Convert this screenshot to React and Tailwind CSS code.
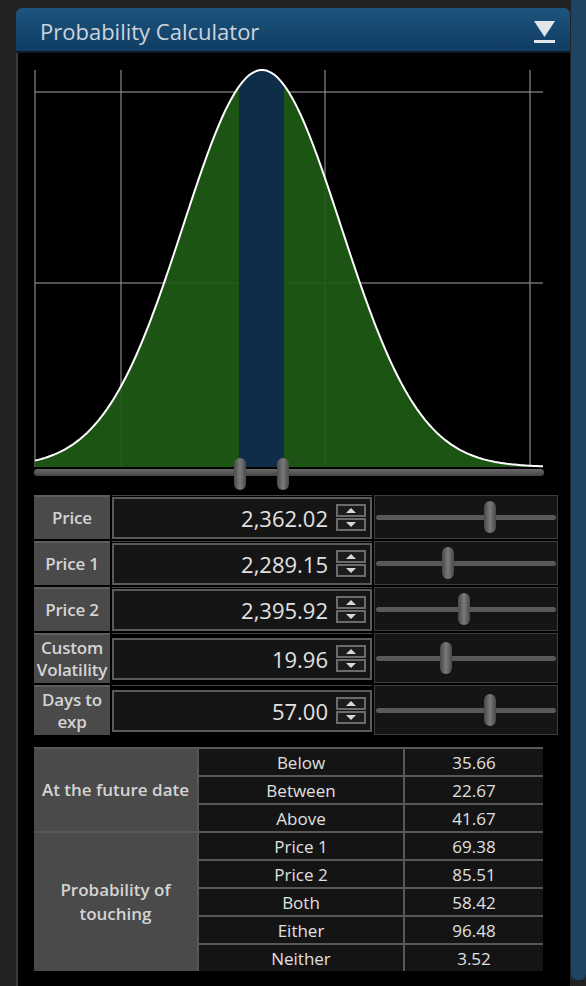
import React from "react";

const W = 510;
const H = 427;
const MU = 228;
const SIG = 79;
const BASE = 399;
const AMP = 397;

function curvePts() {
  const pts = [];
  for (let x = 1; x <= 509; x += 2) {
    const y = BASE - AMP * Math.exp(-((x - MU) ** 2) / (2 * SIG * SIG));
    pts.push([x, y]);
  }
  return pts;
}

function Chart() {
  const pts = curvePts();
  const line = pts.map((p, i) => (i ? "L" : "M") + p[0].toFixed(1) + " " + p[1].toFixed(1)).join(" ");
  const area = line + ` L 509 ${BASE} L 1 ${BASE} Z`;
  const grid = "#8a8a8a";
  return (
    <svg width={W} height={H} viewBox={`0 0 ${W} ${H}`} className="block">
      <defs>
        <clipPath id="under">
          <path d={area} />
        </clipPath>
        <linearGradient id="thumb" x1="0" x2="1" y1="0" y2="0">
          <stop offset="0" stopColor="#4a4a4a" />
          <stop offset="0.5" stopColor="#7a7a7a" />
          <stop offset="1" stopColor="#4a4a4a" />
        </linearGradient>
        <linearGradient id="track" x1="0" x2="0" y1="0" y2="1">
          <stop offset="0" stopColor="#6a6a6a" />
          <stop offset="1" stopColor="#444" />
        </linearGradient>
      </defs>
      <g stroke={grid} strokeOpacity="0.6" strokeWidth="2">
        <line x1="1" y1="2" x2="1" y2={BASE} />
        <line x1="87" y1="2" x2="87" y2={BASE} />
        <line x1="291" y1="2" x2="291" y2={BASE} />
        <line x1="496" y1="2" x2="496" y2={BASE} />
        <line x1="1" y1="24" x2="509" y2="24" />
        <line x1="1" y1="215" x2="509" y2="215" />
      </g>
      <path d={area} fill="#1d5a14" fillOpacity="0.93" />
      <rect x="205" y="0" width="45" height={BASE} fill="#0e2d49" clipPath="url(#under)" />
      <path d={line} fill="none" stroke="#ffffff" strokeWidth="2" />
      <rect x="0" y="401" width="510" height="7" rx="3.5" fill="url(#track)" />
      <rect x="200" y="390" width="12" height="32" rx="6" fill="url(#thumb)" />
      <rect x="243" y="390" width="12" height="32" rx="6" fill="url(#thumb)" />
    </svg>
  );
}

function Spinner() {
  return (
    <div className="flex flex-col gap-[1px] w-[30px]">
      <div className="h-[13px] border-2 border-[#6b6b6b] bg-[#1c1c1c] flex items-center justify-center">
        <div className="w-0 h-0 border-l-[5px] border-r-[5px] border-b-[5px] border-l-transparent border-r-transparent border-b-[#d8d8d8]" />
      </div>
      <div className="h-[13px] border-2 border-[#6b6b6b] bg-[#1c1c1c] flex items-center justify-center">
        <div className="w-0 h-0 border-l-[5px] border-r-[5px] border-t-[5px] border-l-transparent border-r-transparent border-t-[#d8d8d8]" />
      </div>
    </div>
  );
}

const rows = [
  { label: ["Price"], value: "2,362.02", h: "h-[44px]", thumb: "left-[109px]" },
  { label: ["Price 1"], value: "2,289.15", h: "h-[44px]", thumb: "left-[67px]" },
  { label: ["Price 2"], value: "2,395.92", h: "h-[44px]", thumb: "left-[83px]" },
  { label: ["Custom", "Volatility"], value: "19.96", h: "h-[50px]", thumb: "left-[65px]" },
  { label: ["Days to", "exp"], value: "57.00", h: "h-[50px]", thumb: "left-[109px]" },
];

function InputRow({ r }) {
  return (
    <div className={`flex gap-[2px] ${r.h}`}>
      <div className="w-[76px] shrink-0 bg-[#4a4a4a] border-t-2 border-[#5e5e5e] flex flex-col items-center justify-center text-center font-semibold text-[17px] leading-[22px] text-[#d4d4d4] tracking-[-0.2px]">
        {r.label.map((l) => (
          <span key={l}>{l}</span>
        ))}
      </div>
      <div className="w-[260px] shrink-0 border-t border-[#444] flex items-center">
        <div className="w-full h-[42px] border-2 border-[#5a5a5a] bg-[#151515] flex items-center justify-end gap-[8px] pr-[4px]">
          <span className="text-[22px] text-[#e2e2e2] leading-none">{r.value}</span>
          <Spinner />
        </div>
      </div>
      <div className="relative flex-1 border border-[#3d3d3d] bg-[#151515] flex items-center px-[1px]">
        <div className="w-full h-[5px] rounded-full bg-[#595959]" />
        <div className={`absolute top-1/2 -translate-y-1/2 ${r.thumb} w-[12px] h-[32px] rounded-full bg-gradient-to-r from-[#484848] via-[#7a7a7a] to-[#484848]`} />
      </div>
    </div>
  );
}

const tableRows = [
  ["Below", "35.66"],
  ["Between", "22.67"],
  ["Above", "41.67"],
  ["Price 1", "69.38"],
  ["Price 2", "85.51"],
  ["Both", "58.42"],
  ["Either", "96.48"],
  ["Neither", "3.52"],
];

function ResultTable() {
  const cell = "bg-[#141414] flex items-center justify-center text-[17px] text-[#e0e0e0] leading-none";
  return (
    <div className="grid grid-cols-[163px_204px_138px] grid-rows-[repeat(8,26px)] gap-[2px] bg-[#575757] w-[509px] pt-[2px] pr-[2px]">
      <div className="row-start-1 row-span-3 col-start-1 bg-[#4a4a4a] flex items-center justify-center text-center font-semibold text-[17px] text-[#d4d4d4]">
        At the future date
      </div>
      <div className="row-start-4 row-span-5 col-start-1 bg-[#4a4a4a] flex items-center justify-center text-center font-semibold text-[17px] leading-[24px] text-[#d4d4d4]">
        Probability of
        <br />
        touching
      </div>
      {tableRows.map(([a, b]) => (
        <React.Fragment key={a + b}>
          <div className={`${cell} col-start-2`}>{a}</div>
          <div className={`${cell} col-start-3`}>{b}</div>
        </React.Fragment>
      ))}
    </div>
  );
}

export default function App() {
  return (
    <div className="flex w-[586px] h-[986px] overflow-hidden bg-[#222222] font-['Open_Sans',sans-serif]">
      <div className="w-[16px] shrink-0" />
      <div className="w-[554px] shrink-0 flex flex-col pt-[8px]">
        <div className="h-[45px] rounded-t-[6px] bg-gradient-to-b from-[#1d547e] to-[#103d62] flex items-center justify-between pl-[24px] pr-[14px] pt-[2px] border-b-2 border-[#0d1a26]">
          <span className="text-[22px] text-[#cbd5de] leading-none">Probability Calculator</span>
          <svg width="23" height="26" viewBox="0 0 23 26">
            <polygon points="1,3 22,3 11.5,19" fill="#dfe5ea" />
            <rect x="1" y="22" width="21" height="3" fill="#dfe5ea" />
          </svg>
        </div>
        <div className="flex-1 bg-black border-l-2 border-[#3c3c3c] pl-[16px] pr-[12px] pt-[15px] flex flex-col">
          <Chart />
          <div className="flex flex-col gap-[2px]">
            {rows.map((r) => (
              <InputRow key={r.value} r={r} />
            ))}
          </div>
          <div className="mt-[12px]">
            <ResultTable />
          </div>
        </div>
      </div>
      <div className="w-[1px] shrink-0" />
      <div className="w-[15px] shrink-0 h-[980px] bg-[#1d4463] rounded-b-[6px]" />
    </div>
  );
}
